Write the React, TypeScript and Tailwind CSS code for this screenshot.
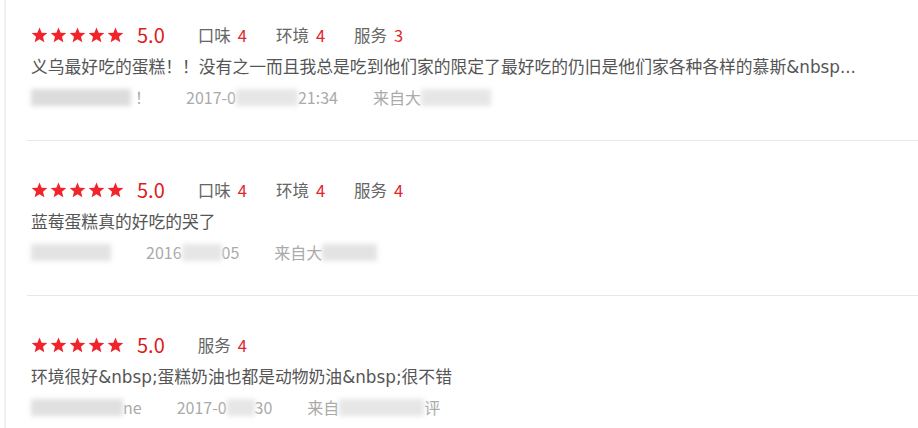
import React from 'react';

const font = { fontFamily: '"Noto Sans CJK SC", "Noto Sans", sans-serif' };
const bodyFont = { fontFamily: '"DejaVu Sans", "Noto Sans CJK SC", sans-serif' };

const Star = () => (
  <svg width="17" height="16" viewBox="0 0 24 23" className="block">
    <polygon
      points="12,0.8 15.1,8.2 23.2,8.8 17,14 19,22 12,17.6 5,22 7,14 0.8,8.8 8.9,8.2"
      fill="#f2242b"
    />
  </svg>
);

const Blur = ({ w, className = '' }: { w: number; className?: string }) => (
  <span
    className={`inline-block h-[17px] bg-[#dcdcdc] blur-[2.5px] align-middle ${className}`}
    style={{ width: w }}
  />
);

interface Score {
  label: string;
  value: number;
}

interface Review {
  scores: Score[];
  text: string;
  meta: React.ReactNode[];
}

const reviews: Review[] = [
  {
    scores: [
      { label: '口味', value: 4 },
      { label: '环境', value: 4 },
      { label: '服务', value: 3 },
    ],
    text: '义乌最好吃的蛋糕！！没有之一而且我总是吃到他们家的限定了最好吃的仍旧是他们家各种各样的慕斯&nbsp...',
    meta: [
      <span key="n" className="flex items-center">
        <Blur w={100} />
        <span className="ml-[4px]">！</span>
      </span>,
      <span key="d" className="flex items-center">
        2017-0
        <Blur w={62} className="bg-[#e6e6e6]" />
        21:34
      </span>,
      <span key="s" className="flex items-center">
        来自大
        <Blur w={70} className="bg-[#e6e6e6]" />
      </span>,
    ],
  },
  {
    scores: [
      { label: '口味', value: 4 },
      { label: '环境', value: 4 },
      { label: '服务', value: 4 },
    ],
    text: '蓝莓蛋糕真的好吃的哭了',
    meta: [
      <span key="n" className="flex items-center">
        <Blur w={80} className="bg-[#e3e3e3]" />
      </span>,
      <span key="d" className="flex items-center">
        2016
        <Blur w={40} className="bg-[#e6e6e6]" />
        05
      </span>,
      <span key="s" className="flex items-center">
        来自大
        <Blur w={55} className="bg-[#e3e3e3]" />
      </span>,
    ],
  },
  {
    scores: [{ label: '服务', value: 4 }],
    text: '环境很好&nbsp;蛋糕奶油也都是动物奶油&nbsp;很不错',
    meta: [
      <span key="n" className="flex items-center">
        <Blur w={92} className="bg-[#e0e0e0]" />
        ne
      </span>,
      <span key="d" className="flex items-center">
        2017-0
        <Blur w={28} className="bg-[#e6e6e6]" />
        30
      </span>,
      <span key="s" className="flex items-center">
        来自
        <Blur w={85} className="bg-[#e6e6e6]" />
        评
      </span>,
    ],
  },
];

function ReviewItem({ review, first }: { review: Review; first: boolean }) {
  return (
    <div
      className={`pl-[4px] border-b border-[#e8e8e8] ${first ? 'pt-[23px]' : 'pt-[37px]'} pb-[31px]`}
    >
      <div className="flex items-center h-[24px]">
        <div className="flex gap-[2px]">
          {[0, 1, 2, 3, 4].map((i) => (
            <Star key={i} />
          ))}
        </div>
        <span className="ml-[13px] text-[20px] leading-[24px] text-[#dd1a21]">5.0</span>
        <div className="ml-[33px] flex items-center gap-[29px] text-[16.5px] text-[#666]">
          {review.scores.map((s) => (
            <span key={s.label}>
              {s.label}
              <span className="ml-[7px] text-[#e4242b]">{s.value}</span>
            </span>
          ))}
        </div>
      </div>
      <div
        className="mt-[8px] h-[24px] leading-[24px] text-[16.8px] text-[#555] whitespace-nowrap"
        style={bodyFont}
      >
        {review.text}
      </div>
      <div className="mt-[6px] h-[24px] flex items-center gap-[35px] text-[16px] text-[#aaa]">
        {review.meta}
      </div>
    </div>
  );
}

export default function App() {
  return (
    <div className="w-[918px] h-[428px] bg-white overflow-hidden pl-[4px]" style={font}>
      <div className="h-full border-l-2 border-[#efefef] pl-[21px]">
        {reviews.map((r, i) => (
          <ReviewItem key={i} review={r} first={i === 0} />
        ))}
      </div>
    </div>
  );
}
